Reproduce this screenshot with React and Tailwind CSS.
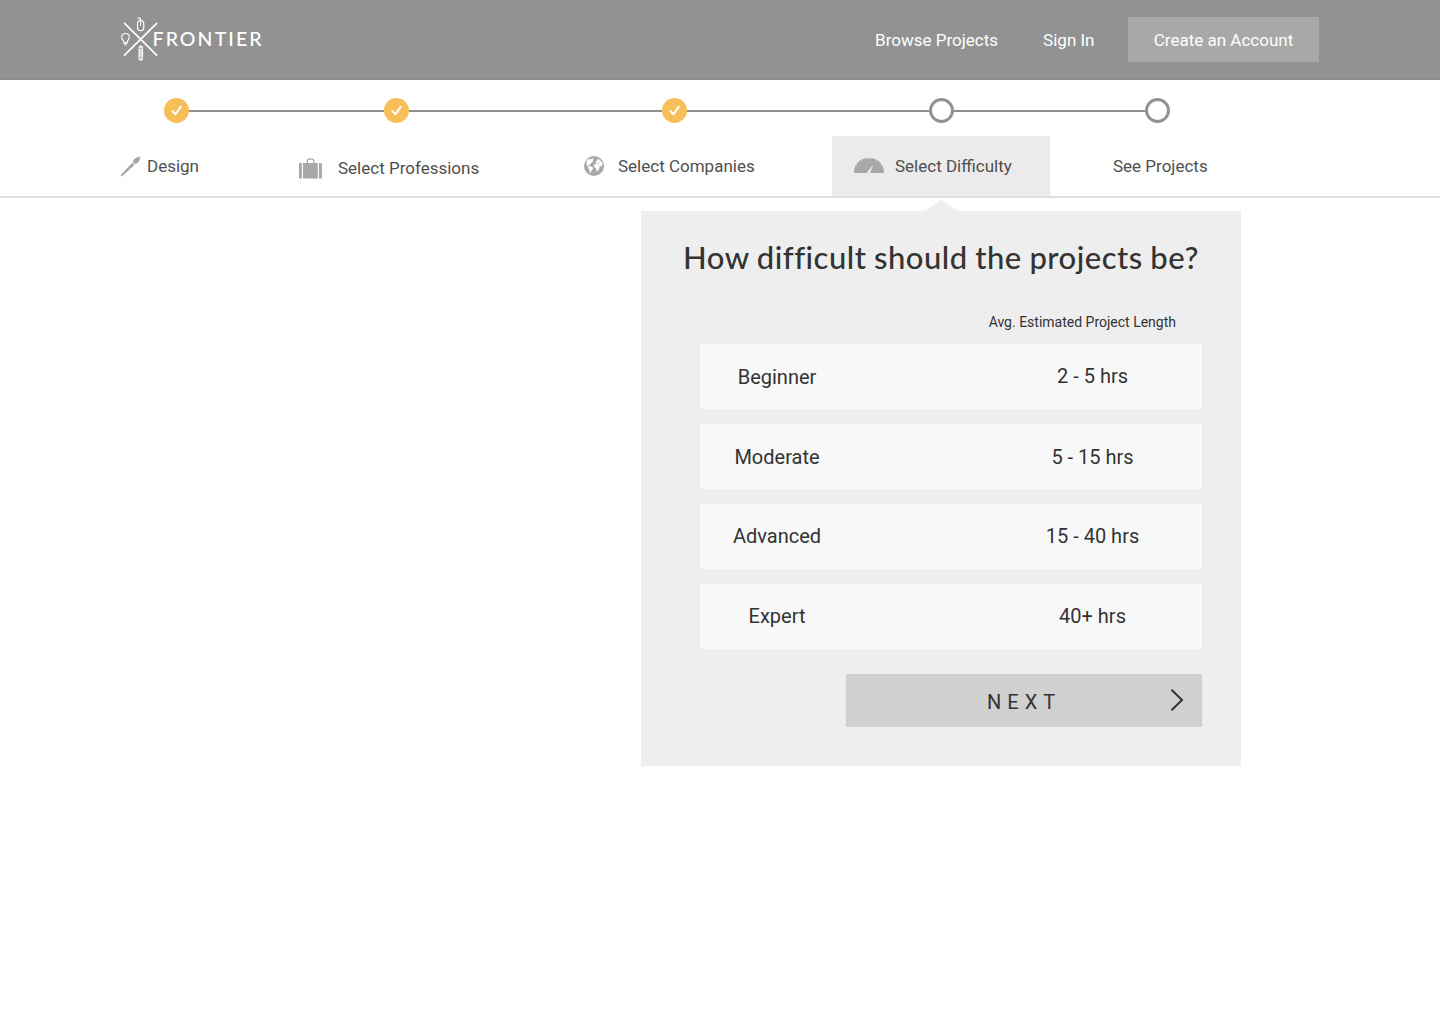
function Logo() {
  return (
    <div className="flex h-full items-center pb-px text-white">
      <svg width="40" height="48" viewBox="120 15 40 48" fill="none" stroke="currentColor" strokeLinecap="round" aria-hidden="true">
        <path d="M124.6 23.4 156.6 55.2M156.6 23.4 124.6 55.2" strokeWidth="1.7" />
        <path d="M138 18.3c1.6-1 3 .2 2.500 2.200M137.500 24.200c0-2.600 1.300-3.700 3.100-3.700s3.200 1.100 3.200 3.700v3.200c0 2-1.300 3.200-3.200 3.200s-3.100-1.200-3.100-3.200zM140.600 20.800v4.200" strokeWidth="1.200" />
        <path d="M123.700 42.200c0-1.800-2-2.400-2-5 0-2 1.600-3.700 3.800-3.700s3.800 1.700 3.800 3.700c0 2.600-2 3.200-2 5z" strokeWidth="1.100" />
        <path d="M124 43.500h3M124.700 45h1.600" strokeWidth="1.200" />
        <rect x="139" y="46" width="3.600" height="14.300" rx="1.500" fill="#ffffffaa" strokeWidth="1" />
        <path d="M139.500 48.500h2.600M139.500 57.300h2.600" stroke="#929292" strokeWidth=".6" />
      </svg>
      <span className="-ml-[7.500px] font-['Lato',sans-serif] text-[19.500px] leading-none font-medium tracking-[2.100px]">FRONTIER</span>
    </div>
  );
}

function Header() {
  return (
    <header className="flex h-20 items-center justify-between border-b border-[#8a8a8a] bg-[#929292] pr-[121px] pl-[120px] text-[17px] text-white">
      <Logo />
      <nav className="flex items-center">
        <a className="mr-[45px] pt-0.5">Browse Projects</a>
        <a className="mr-[33.500px] pt-0.5">Sign In</a>
        <button className="h-[45px] w-[191px] bg-[#a8a8a8] pt-0.5">Create an Account</button>
      </nav>
    </header>
  );
}

function Done() {
  return (
    <svg className="size-[25px] shrink-0" viewBox="0 0 25 25" aria-hidden="true">
      <circle cx="12.500" cy="12.500" r="12.500" fill="#f7bf58" />
      <path d="M8.500 13.100 11.300 16.300 16.900 8.700" fill="none" stroke="#fff" strokeWidth="2" strokeLinecap="round" strokeLinejoin="round" />
    </svg>
  );
}

function Todo() {
  return <span className="size-[25px] shrink-0 rounded-full border-3 border-[#929292] bg-white" />;
}

function Line({ width }) {
  return <span className={`mt-px h-0.5 shrink-0 bg-[#8f8f8f] ${width}`} />;
}

function BrushIcon() {
  return (
    <svg width="21" height="21" viewBox="0 0 21 21" fill="#a8a8a8" aria-hidden="true">
      <path d="M.8 20.400C.6 19.700.9 19 1.400 18.300L12.200 6.700l2.300 2.300L3.200 19.200c-.8.700-1.700 1.300-2.400 1.200z" />
      <path d="M12.900 6.200C13.200 3.200 15.800 1 20.700.400 19.900 1.600 20.100 3.300 19.200 4.800c-1 1.800-2.500 2.900-4.200 3.500z" />
    </svg>
  );
}

function SuitcaseIcon() {
  return (
    <svg width="24" height="21" viewBox="299 157.500 24 21" fill="#a8a8a8" aria-hidden="true">
      <path d="M299.700 162.600h2.100v15.500h-2.100a.7.700 0 0 1-.7-.7v-14.100c0-.4.300-.7.700-.7zM303 162.600h14.800v15.500H303zM319 162.600h2.200c.4 0 .7.300.7.700v14.100c0 .4-.3.700-.7.700H319z" />
      <path d="M307.400 162.800v-2.300c0-1.200.7-1.900 1.900-1.900h2.600c1.200 0 1.900.7 1.900 1.900v2.300" fill="none" stroke="#a8a8a8" strokeWidth="1.300" />
    </svg>
  );
}

function GlobeIcon() {
  return (
    <svg width="20" height="20" viewBox="0 0 20 20" aria-hidden="true">
      <circle cx="10" cy="10" r="10" fill="#a8a8a8" />
      <path d="M2.600 4.800 4.400 3 6.500 3.200 8.600 2.200l.9.700-.9 1.300.6 1.300-1.900 1.200-.9 1.500-1.600.5.400 1.200 2.300.6 1.700 1.500-.8 1.700-1.100 1.100-.5 2.200-.9-.5-.7-3.100-1-1.500.2-1.400-1.600-1.200L2.400 6.500zM11.900 6.300l1-2 1.300-1.300 1.700.9 1.900 2.300.8 2.200-.8.300.1 1.400-1.100.5-1-.9-.9.400.9.700-.6 1.900-1 1.300-.6 1.500-1-.2-.5-2.100-.4-1.500-1.400-.4-.5-1.600 1-1.400 1.500-.3-.7-.7z" fill="#fff" />
      <path d="M12.700 6.900l2 .3.300.8-1.800-.2zM15.200 4.900l1.100.8-.9.500z" fill="#a8a8a8" />
    </svg>
  );
}

function GaugeIcon() {
  return (
    <svg className="mb-px" width="30" height="15" viewBox="0 0 30 15" aria-hidden="true">
      <path d="M0 14.300C0 6 6.500 0 15 0s15 6 15 14.300c0 .4-.3.700-.7.700H.7a.7.700 0 0 1-.7-.7z" fill="#a8a8a8" />
      <path d="M14.500 0v1.500M7.300 2.200l.6 1M22.700 2.200l-.6 1M2.200 7.200l1 .6M27.800 7.200l-1 .6" stroke="#ebebeb" strokeWidth=".8" />
      <path d="M13.100 15c.1-.9.600-1.600 1.300-2.600L19 7 17.200 12.300c-.3.800-.9 1.700-1 2.700z" fill="#ebebeb" />
    </svg>
  );
}

function Steps() {
  return (
    <section className="h-[118px] border-b-2 border-[#dedede]">
      <div className="flex h-14 items-center pt-[6px] pb-px pl-[164px]">
        <Done />
        <Line width="w-[195px]" />
        <Done />
        <Line width="w-[253px]" />
        <Done />
        <Line width="w-[242px]" />
        <Todo />
        <Line width="w-[191px]" />
        <Todo />
      </div>
      <div className="flex h-[60px] pl-[120px] text-[17px] text-[#4f4f4f]">
        <a className="flex w-[179px] items-center gap-[6px]">
          <BrushIcon />
          <span className="pt-px">Design</span>
        </a>
        <a className="flex w-[285px] items-center gap-[15px] pt-1">
          <SuitcaseIcon />
          <span className="pt-px">Select Professions</span>
        </a>
        <a className="flex w-[248px] items-center gap-[14px]">
          <GlobeIcon />
          <span className="pt-px">Select Companies</span>
        </a>
        <a className="flex w-[218px] items-center gap-[11px] bg-[#ebebeb] pl-[22px]">
          <GaugeIcon />
          <span className="pt-px">Select Difficulty</span>
        </a>
        <a className="flex items-center pt-px pl-[63px]">See Projects</a>
      </div>
    </section>
  );
}

const levels = [
  { name: "Beginner", hours: "2 - 5 hrs", nameShift: "pt-px", hoursShift: "pb-px" },
  { name: "Moderate", hours: "5 - 15 hrs", nameShift: "pt-px", hoursShift: "pt-px" },
  { name: "Advanced", hours: "15 - 40 hrs", nameShift: "pb-px", hoursShift: "pb-px" },
  { name: "Expert", hours: "40+ hrs", nameShift: "pb-px", hoursShift: "pb-px" },
];

function DifficultyPanel() {
  return (
    <main className="ml-[641px] w-[600px]">
      <svg className="mx-auto mt-0.5 block" width="34" height="11" viewBox="0 0 34 11" aria-hidden="true">
        <path d="M17.300 0 33.500 11H1z" fill="#eee" />
      </svg>
      <div className="h-[555px] bg-[#eeeeee] pr-[39px] pl-[59px] text-[#333]">
        <h1 className="-mr-[39px] -ml-[59px] pt-[26px] text-center font-['Lato',sans-serif] text-[31px] leading-[40px] font-medium tracking-[0.5px] whitespace-nowrap [word-spacing:-0.7px]">
          How difficult should the projects be?
        </h1>
        <p className="mt-[35px] pr-[26px] text-right text-sm">Avg. Estimated Project Length</p>
        <ul className="mt-3 flex flex-col gap-[15px] text-xl">
          {levels.map((l) => (
            <li key={l.name} className="flex h-[65px] justify-between bg-[#f8f8f8] text-center">
              <span className={`flex w-[154px] items-center justify-center ${l.nameShift}`}>{l.name}</span>
              <span className={`flex w-[219px] items-center justify-center ${l.hoursShift}`}>{l.hours}</span>
            </li>
          ))}
        </ul>
        <button className="mt-[25px] ml-auto flex h-[53px] w-[356px] items-center justify-between bg-[#d0d0d0] pr-[18px] pl-[141px]">
          <span className="pt-[3px] text-xl tracking-[6px]">NEXT</span>
          <svg className="mb-px" width="14" height="24" viewBox="0 0 14 24" fill="none" stroke="#333" strokeWidth="2" aria-hidden="true">
            <path d="M1.500 1.800 12 12 1.500 22.200" />
          </svg>
        </button>
      </div>
    </main>
  );
}

export default function App() {
  return (
    <div className="h-[1024px] w-[1440px] overflow-hidden bg-white font-['Roboto',sans-serif]">
      <Header />
      <Steps />
      <DifficultyPanel />
    </div>
  );
}
